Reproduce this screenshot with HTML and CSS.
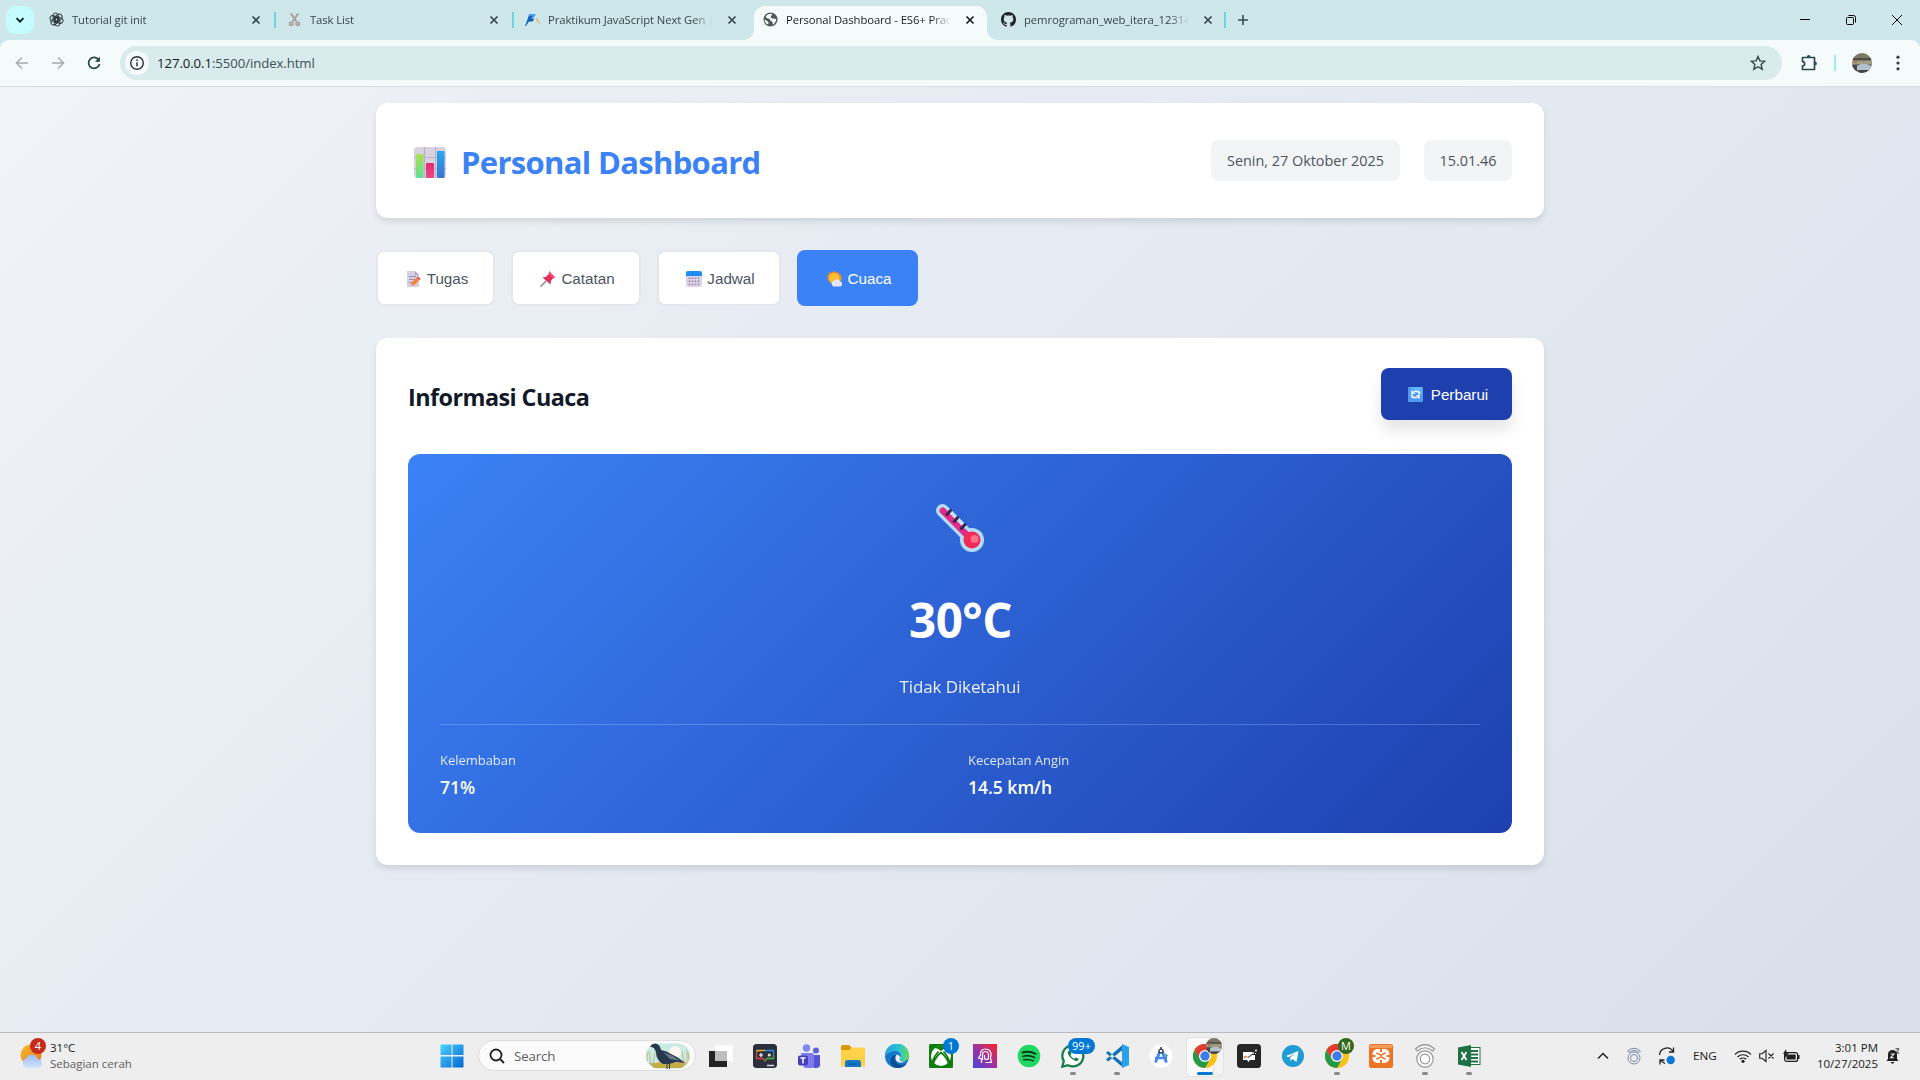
FILE: index.html
```html
<!DOCTYPE html>
<html lang="id">
<head>
<meta charset="utf-8">
<title>Personal Dashboard - ES6+ Practice</title>
<link rel="stylesheet" href="styles.css">
</head>
<body>
<svg class="defs" width="0" height="0">
  <defs>
    <symbol id="x" viewBox="0 0 10 10"><path d="M1.5 1.5l7 7M8.5 1.5l-7 7" stroke="currentColor" stroke-width="1.7" fill="none"/></symbol>
    <symbol id="chrome" viewBox="0 0 24 24">
      <circle cx="12" cy="12" r="12" fill="#fbc116"/>
      <path d="M12 12L1.6 6A12 12 0 0 1 22.4 6z" fill="#e33b2e"/>
      <path d="M12 6h10.4A12 12 0 0 0 1.6 6L6.8 15z" fill="#e33b2e"/>
      <path d="M1.6 6A12 12 0 0 0 12 24l5.2-9L12 17 6.8 15z" fill="#249a46"/>
      <circle cx="12" cy="12" r="6" fill="#fff"/><circle cx="12" cy="12" r="4.7" fill="#3b7ded"/>
    </symbol>
    <symbol id="photo" viewBox="0 0 20 20">
      <clipPath id="pc"><circle cx="10" cy="10" r="10"/></clipPath>
      <g clip-path="url(#pc)"><path fill="#7c7868" d="M0 0h20v20H0z"/><path fill="#4f4e45" d="M0 5h20v2H0z"/><path fill="#a49d86" d="M0 8h20v3H0z"/><path fill="#b4c0cf" d="M5 13l4-2h6l5 3v3H5z"/><path fill="#45454a" d="M0 12h5v8H0zM6 17h14v3H6z"/><path fill="#b0704c" d="M2 7h3v3H2z"/></g>
    </symbol>
  </defs>
</svg>

<div class="screen">
  <div class="tabstrip">
    <button class="tab-search"><svg width="10" height="10" viewBox="0 0 10 10"><path d="M1.5 3.2L5 6.7l3.500-3.500" fill="none" stroke="#0d1f22" stroke-width="1.9"/></svg></button>
    <div class="tab">
      <svg class="fav" viewBox="0 0 16 16"><g fill="none" stroke="#263033" stroke-width="1"><rect x="4.300" y="1" width="5.600" height="9" rx="2.800"/><rect x="4.300" y="1" width="5.600" height="9" rx="2.800" transform="rotate(60 8 8)"/><rect x="4.300" y="1" width="5.600" height="9" rx="2.800" transform="rotate(120 8 8)"/><rect x="4.300" y="1" width="5.600" height="9" rx="2.800" transform="rotate(180 8 8)"/><rect x="4.300" y="1" width="5.600" height="9" rx="2.800" transform="rotate(240 8 8)"/><rect x="4.300" y="1" width="5.600" height="9" rx="2.800" transform="rotate(300 8 8)"/></g></svg>
      <span class="tab-title">Tutorial git init</span><svg class="close"><use href="#x"/></svg>
    </div>
    <div class="tab ruled">
      <svg class="fav" viewBox="0 0 16 16"><g fill="none" stroke="#aaa29b" stroke-width="2"><path d="M4 1.500L10 10M12 1.500L6 10"/><circle cx="4.500" cy="12.500" r="1.700"/><circle cx="11.500" cy="12.500" r="1.700"/></g></svg>
      <span class="tab-title">Task List</span><svg class="close"><use href="#x"/></svg>
    </div>
    <div class="tab ruled">
      <svg class="fav" viewBox="0 0 16 16"><path d="M4 2h8L9 6H4z" fill="#55a2f0"/><path d="M4 4h5L5 9 1 15H0z" fill="#1668c8"/><path d="M5 7h5l-2 3H4z" fill="#1b56a4"/><path d="M12 7l3.500 5" stroke="#d8b56a" stroke-width="1.500"/></svg>
      <span class="tab-title">Praktikum JavaScript Next Gen | Kelas</span><svg class="close"><use href="#x"/></svg>
    </div>
    <div class="tab active">
      <svg class="fav" viewBox="0 0 16 16"><circle cx="8" cy="8" r="7.500" fill="#53585b"/><path d="M3 4.500C5 2 8 1.500 9.500 2c.5 2-1.500 2-1.500 3.500 1.500.5 1.500 1.500 3 1.500s2 .8 3 .5c0 2-1 4.500-3.500 6-.5-1.500.5-2.500-1-3.500C7 9 8 7 5.500 6.800 4 6.600 3 6 3 4.500zM1.500 8l3 1.500 1.500 2-.5 1.800C3 12.500 1.500 10 1.500 8z" fill="#f5fbfb"/></svg>
      <span class="tab-title">Personal Dashboard - ES6+ Practice</span><svg class="close"><use href="#x"/></svg>
    </div>
    <div class="tab">
      <svg class="fav" viewBox="0 0 16 16"><path fill="#1f2428" d="M8 0C3.580 0 0 3.580 0 8c0 3.540 2.290 6.530 5.470 7.590.4.070.55-.17.55-.38 0-.19-.01-.82-.01-1.490-2.010.37-2.530-.49-2.690-.94-.09-.23-.48-.94-.82-1.130-.28-.15-.68-.52-.01-.53.63-.01 1.080.58 1.230.82.720 1.210 1.870.87 2.330.66.070-.52.280-.87.510-1.070-1.780-.2-3.640-.89-3.640-3.950 0-.87.310-1.590.82-2.150-.08-.2-.36-1.020.08-2.120 0 0 .67-.21 2.200.82.640-.18 1.320-.27 2-.27s1.360.09 2 .27c1.530-1.040 2.200-.82 2.200-.82.440 1.100.16 1.920.08 2.120.51.560.82 1.270.82 2.150 0 3.070-1.870 3.750-3.650 3.950.29.25.54.73.54 1.480 0 1.070-.01 1.930-.01 2.200 0 .21.150.46.55.38A8.010 8.010 0 0 0 16 8c0-4.420-3.580-8-8-8z"/></svg>
      <span class="tab-title">pemrograman_web_itera_123140</span><svg class="close"><use href="#x"/></svg>
    </div>
    <svg class="newtab" viewBox="0 0 12 12"><path d="M6 1v10M1 6h10" stroke="#354b4e" stroke-width="1.600"/></svg>
    <div class="winbtns">
      <svg width="12" height="12" viewBox="0 0 12 12"><path d="M1 5.500h10" stroke="#000"/></svg>
      <svg width="12" height="12" viewBox="0 0 12 12"><g fill="none" stroke="#000"><rect x="1.500" y="3.500" width="7" height="7" rx="1"/><path d="M3.500 1.500h5a2 2 0 0 1 2 2v5"/></g></svg>
      <svg width="12" height="12" viewBox="0 0 12 12"><path d="M1 1l10 10M11 1L1 11" stroke="#000"/></svg>
    </div>
  </div>

  <div class="toolbar">
    <svg class="tb" viewBox="0 0 16 16"><path d="M14 8H3M8 2.500L2.500 8 8 13.500" fill="none" stroke="#a3adae" stroke-width="1.500"/></svg>
    <svg class="tb" viewBox="0 0 16 16"><path d="M2 8h11M8 2.500L13.500 8 8 13.500" fill="none" stroke="#a3adae" stroke-width="1.500"/></svg>
    <svg class="tb" viewBox="0 0 16 16"><path d="M12.800 5A5.500 5.500 0 1 0 13.500 9" fill="none" stroke="#2b4144" stroke-width="1.700"/><path d="M13.900 1.800v5H8.900z" fill="#2b4144"/></svg>
    <div class="omnibox">
      <span class="info"><svg width="16" height="16" viewBox="0 0 16 16"><circle cx="8" cy="8" r="6.300" fill="none" stroke="#233538" stroke-width="1.400"/><path d="M8 7.200v4M8 4.500v1.500" stroke="#233538" stroke-width="1.500"/></svg></span>
      <span class="url"><b>127.0.0.1</b>:5500/index.html</span>
      <svg class="star" viewBox="0 0 16 16"><path d="M8 1.500l1.900 4.400 4.800.4-3.600 3.200 1.100 4.700L8 11.700l-4.200 2.500 1.100-4.700L1.300 6.300l4.800-.4z" fill="none" stroke="#34484b" stroke-width="1.400"/></svg>
    </div>
    <svg class="puzzle" viewBox="0 0 18 18"><path d="M2.500 3.500h12v12h-12v-3.600a2.100 2.100 0 0 0 0-4.300z" fill="none" stroke="#2b4a4e" stroke-width="1.700" stroke-linejoin="round"/><path d="M6.800 3a1.900 1.900 0 0 1 3.800 0M15 7.500a1.900 1.900 0 0 1 0 3.800" fill="#2b4a4e"/></svg>
    <i class="tbsep"></i>
    <svg class="avatar"><use href="#photo"/></svg>
    <svg class="kebab" viewBox="0 0 4 16"><g fill="#2b4144"><circle cx="2" cy="2.200" r="1.600"/><circle cx="2" cy="8" r="1.600"/><circle cx="2" cy="13.800" r="1.600"/></g></svg>
  </div>

  <main class="page">
    <header class="card header">
      <h1><svg width="32" height="32" viewBox="0 0 32 32">
        <defs><linearGradient id="g1" x2="0" y2="1"><stop stop-color="#a8e34f"/><stop offset="1" stop-color="#62dc9a"/></linearGradient><linearGradient id="g2" x2="0" y2="1"><stop stop-color="#e5286b"/><stop offset="1" stop-color="#e84a86"/></linearGradient><linearGradient id="g3" x2="0" y2="1"><stop stop-color="#29a6f2"/><stop offset="1" stop-color="#3c74cf"/></linearGradient></defs>
        <rect width="32" height="31" rx="3.500" fill="#d9d2e2"/><path d="M10.500 0v31M21.500 0v31M0 10.500h32M0 21.500h32" stroke="#b9b1c5" stroke-width="1.200"/>
        <rect x="2" y="7" width="7.500" height="24" rx="1" fill="url(#g1)"/><rect x="12" y="16" width="8" height="15" rx="1" fill="url(#g2)"/><rect x="23" y="4" width="7.500" height="27" rx="1" fill="url(#g3)"/></svg><span>Personal Dashboard</span></h1>
      <div class="clock"><span class="pill date">Senin, 27 Oktober 2025</span><span class="pill time">15.01.46</span></div>
    </header>

    <nav class="nav">
      <button class="w1"><svg viewBox="0 0 16 16"><path d="M1 0h8l4 4v12H1z" fill="#d6cfe0"/><path d="M9 0v4h4z" fill="#a9a0bb"/><path d="M3 5.500h7M3 8.500h6M3 11.500h3" stroke="#988fa9"/><path d="M5 14.500l1-3.500 6-5.500 2.500 2.500-6 6z" fill="#f8813f"/><path d="M11 6.500l1-1 2.500 2.500-1 1z" fill="#e5486c"/></svg>Tugas</button>
      <button class="w2"><svg viewBox="0 0 16 16"><path d="M6 10l-5.500 5.500" stroke="#898095" stroke-width="1.500"/><path d="M9 0l6.500 6.500-2 .5-2.500 2.800-.5 3.700L2.500 6.500l3.700-.8L8.800 3z" fill="#e02e58"/><path d="M9 1l5.500 5.500-1.500.4L8.700 3z" fill="#fa5c80"/></svg>Catatan</button>
      <button class="w3"><svg viewBox="0 0 16 16"><rect y="1" width="16" height="15" rx="2" fill="#ddd4eb"/><path d="M0 5V2a2 2 0 0 1 2-2h12a2 2 0 0 1 2 2v3z" fill="#1e8df0"/><path d="M3.500 6.500v8M6.500 6.500v8M9.500 6.500v8M12.500 6.500v8" stroke="#91849f" stroke-width="1.500" stroke-dasharray="1.600 1.500"/></svg>Jadwal</button>
      <button class="w4 on"><svg viewBox="0 0 16 16"><path d="M7.500 0l1.700 1.500 2.300-.3.800 2 2.200 1-.4 2.300.9 2-1.700 1.500-.5 2.200-10-.2-.4-2-2-1 .6-2.300-1-2 1.900-1.300.4-2.100 2.400.1z" fill="#f58a26"/><circle cx="7.300" cy="7" r="5.300" fill="#fcbf31"/><path d="M6.500 15.500a3 3 0 0 1 .3-5.700 3.700 3.700 0 0 1 6.500.8 2.600 2.600 0 0 1 .2 4.900z" fill="#e3e6f3"/></svg>Cuaca</button>
    </nav>

    <section class="card main">
      <div class="main-head"><h2>Informasi Cuaca</h2>
        <button class="refresh"><svg width="15" height="15" viewBox="0 0 15 15"><rect width="15" height="15" rx="1" fill="#4f9bf0"/><path d="M1 0h13v8z" fill="#63b3fa"/><g fill="none" stroke="#fff" stroke-width="1.700"><path d="M11.300 7.500V6.500a2 2 0 0 0-2-2H5.500M3.700 7.500v1a2 2 0 0 0 2 2h3.800"/></g><path d="M3.300 2.800v4.200h3.800zM11.700 12.200V8H7.900z" fill="#fff"/></svg>Perbarui</button></div>
      <div class="weather">
        <svg class="thermo" viewBox="0 0 48 48"><path d="M6.500 6.500L33 33" stroke="#b4dcfb" stroke-width="13" stroke-linecap="round"/><circle cx="36" cy="36" r="12" fill="#b4dcfb"/><path d="M6.800 6.800L34 34" stroke="#e32a86" stroke-width="6.500" stroke-linecap="round"/><path d="M15 8.500L30 23.500" stroke="#c5e3fc" stroke-width="3.500"/><path d="M11 10.500l3.500-4M18.200 17.500l3.500-4M25.500 24.500l3.500-4" stroke="#34264f" stroke-width="3" stroke-linecap="round"/><circle cx="36" cy="36" r="8.500" fill="#f32957"/><circle cx="38.500" cy="35" r="4" fill="#ff8296" opacity=".8"/></svg>
        <div class="temp">30°C</div>
        <div class="desc">Tidak Diketahui</div>
        <div class="details">
          <div><span class="lbl">Kelembaban</span><span class="val">71%</span></div>
          <div><span class="lbl">Kecepatan Angin</span><span class="val">14.5 km/h</span></div>
        </div>
      </div>
    </section>
  </main>

  <footer class="taskbar">
    <div class="widget">
      <div class="wicon"><svg width="24" height="26" viewBox="0 0 24 26"><defs><linearGradient id="sun" x2="1" y2="1"><stop stop-color="#f2bd2c"/><stop offset="1" stop-color="#f0741d"/></linearGradient><linearGradient id="cl" x2="0" y2="1"><stop stop-color="#9dbcf3"/><stop offset="1" stop-color="#d3e4fb"/></linearGradient></defs><circle cx="11" cy="12" r="10.500" fill="url(#sun)"/><path d="M6 25a5 5 0 0 1-.3-9.200 6.500 6.500 0 0 1 12 .1A4.600 4.600 0 0 1 18 25z" fill="url(#cl)"/></svg><span class="badge red">4</span></div>
      <div class="wtext"><span>31°C</span><span class="grey">Sebagian cerah</span></div>
    </div>
    <div class="apps">
      <div class="app"><svg width="24" height="24" viewBox="0 0 24 24"><defs><linearGradient id="win" x2="1" y2="1"><stop stop-color="#4fd0ff"/><stop offset="1" stop-color="#0068d0"/></linearGradient></defs><path fill="url(#win)" d="M1 .5h10.500V11H.5V1zM12.500.5H23L23.500 1v10h-11zM.5 12.500h11v11H1L.5 23zM12.500 12.500h11V23l-.5.5H12.500z"/></svg></div>
      <div class="search"><svg width="16" height="16" viewBox="0 0 16 16"><circle cx="7" cy="7" r="5.500" fill="none" stroke="#222" stroke-width="1.800"/><path d="M11 11l4 4" stroke="#222" stroke-width="2"/></svg><span>Search</span>
        <svg class="bird" width="46" height="26" viewBox="0 0 46 26"><rect x="1" y=".5" width="44" height="25" rx="12" fill="#c8ebe4"/><circle cx="30" cy="9" r="6" fill="#fff6f1"/><path d="M10 21q8-7 28-4l4 3-6 5H11z" fill="#f1b796"/><path d="M4 20h38l-5 5H9z" fill="#c2ad42"/><path d="M2 18V9M6 22L4 8M8 22l2-13M42 20V7M39 21l-2-13M44 17l-1-8" stroke="#c5b887" fill="none"/><path d="M5 3.500Q8-.5 12 1q3 1 4 6 6 1 10 4l6 3 8 6-9-1-7 2h-6q-7-4-7-12L9 5z" fill="#26384c"/><path d="M18 9l10 4 7 5-10-2z" fill="#66798e"/><path d="M22 20v6M24.500 20v6" stroke="#333c47"/></svg></div>
      <div class="app first"><svg width="24" height="24" viewBox="0 0 24 24"><path d="M0 7h18v16H0z" fill="#242424"/><rect x="6" y="1" width="18" height="16" fill="#fff" opacity=".85"/><path d="M6 7h12v10H6z" fill="#bdbdbd"/></svg></div>
      <div class="app"><svg width="24" height="24" viewBox="0 0 24 24"><rect width="24" height="24" rx="3.500" fill="#2b303c"/><g fill="none" stroke-width="1.300"><path d="M12 6.500H4v2" stroke="#eaaf20"/><path d="M12 6.500h8.500v4" stroke="#2c8be4"/><path d="M3.500 8.500v6H10l2 2.500" stroke="#df3f45"/><path d="M12 17l2-2.500h6.500v-4" stroke="#4bb04b"/></g><path d="M6 11h4M8 9v4" stroke="#fff" stroke-width="1.200"/><circle cx="16.300" cy="11" r="1.600" fill="#ddd"/><path d="M14 21.500h7" stroke="#ddd" stroke-width="1.500"/></svg></div>
      <div class="app"><svg width="24" height="24" viewBox="0 0 24 24"><circle cx="9.500" cy="4" r="3.700" fill="#7e88f0"/><circle cx="19" cy="6.500" r="3" fill="#5b62dd"/><path d="M15 11h8v8a4 4 0 0 1-8 2z" fill="#5257d0"/><path d="M4 9h11a2 2 0 0 1 2 2v7a5.500 5.500 0 0 1-11 3z" fill="#8079ee"/><rect x="1" y="11.500" width="10" height="10" rx="2" fill="#4340bd"/><path d="M3.500 14h5M6 14v5.500" stroke="#fff" stroke-width="1.500"/></svg></div>
      <div class="app"><svg width="24" height="24" viewBox="0 0 24 24"><path d="M0 2.500a1.500 1.500 0 0 1 1.500-1.500H8l2.500 2.500V9H0z" fill="#d9980d"/><path d="M0 6h8l3-2.500h11.500A1.500 1.500 0 0 1 24 5v17.500H0z" fill="#ffd148"/><path d="M4 23v-4.500A2.500 2.500 0 0 1 6.500 16h11a2.500 2.500 0 0 1 2.500 2.500V23z" fill="#1878c8"/><path d="M7 20h10" stroke="#0d5b9f" stroke-width="1.300"/></svg></div>
      <div class="app"><svg width="24" height="24" viewBox="0 0 24 24"><defs><linearGradient id="ed" x2="1"><stop stop-color="#2aa0df"/><stop offset=".6" stop-color="#2cc5cf"/><stop offset="1" stop-color="#68dd59"/></linearGradient></defs><circle cx="12" cy="12" r="12" fill="#1478c9"/><path d="M0 12A12 12 0 0 1 24 11c.3 4-2.500 6-5.500 6-3 0-4-1.300-4-2 0-1 1.300-1.500 1.300-3.500C15.500 8 11 6 7 7.500 3.500 8.500 1 11 0 12z" fill="url(#ed)"/><path d="M11 11c-3 4 0 10 6 10 2 0 4-1 5-2-2 4-6 5-10 5C7 23.500 4 18 6 14c1-2 3-3 5-3z" fill="#114c93"/><path d="M12 10.500a4 4 0 0 1 3.300 3.500c-.5.800-.8 1-.8 1.500 0 1.500 3 2.500 6 1.500-5 3.500-10 1-10-3 0-1.500.5-2.500 1.500-3.500z" fill="#eee"/></svg></div>
      <div class="app"><svg width="24" height="24" viewBox="0 0 24 24"><rect width="24" height="24" rx="1.500" fill="#107c10"/><circle cx="12" cy="12" r="10" fill="#fff"/><path d="M5.500 4Q9 4 12 7q3-3 6.500-3Q16 2 12 2T5.500 4z" fill="#107c10"/><path d="M4 20Q6 13.500 12 8.500q6 5 8 11.500M3.500 18Q5 12 9.500 7.500M20.500 18Q19 12 14.500 7.500" fill="none" stroke="#107c10" stroke-width="1.700"/></svg><span class="badge blue">1</span></div>
      <div class="app"><svg width="24" height="24" viewBox="0 0 24 24"><defs><linearGradient id="ai" y1="1" x2="1" y2="0"><stop stop-color="#4746dc"/><stop offset=".5" stop-color="#a0329e"/><stop offset="1" stop-color="#ff2320"/></linearGradient></defs><path d="M0 0h24v24H0z" fill="url(#ai)"/><g fill="none" stroke="#fff" stroke-width="1.200"><path d="M8.500 19v-4l-3-1 2-3c-.5-4 2-6 5-6 4 0 6 3 5.500 6.500L17.500 14l1 4.500h-6"/><path d="M9.500 16v-5.500a3 3 0 0 1 6 0v3a2 2 0 0 1-4 0v-2.500"/></g></svg></div>
      <div class="app"><svg width="24" height="24" viewBox="0 0 24 24"><circle cx="12" cy="12" r="11.300" fill="#1ed760"/><g fill="none" stroke="#10351d" stroke-linecap="round"><path d="M5.500 8.500q7-2 13 1.300" stroke-width="2.100"/><path d="M6 12.300q6-1.600 11.500 1.200" stroke-width="1.800"/><path d="M6.800 15.800q5-1.200 9.500 1" stroke-width="1.500"/></g></svg></div>
      <div class="app run"><svg width="24" height="24" viewBox="0 0 24 24"><path d="M1.300 22.700l1.500-5.500A10.500 10.500 0 1 1 7 21.200z" fill="#fff" stroke="#177d4c" stroke-width="2.300"/><path d="M8 6.500c-2 1-1.500 4 1.500 7s6.500 4.500 8 2.500l-.3-1.500-2.700-1-1.300 1.300C11.500 14 10 12.500 9.500 11l1-1.300-1-3z" fill="#177d4c"/></svg><span class="badge blue wide">99+</span></div>
      <div class="app run"><svg width="24" height="24" viewBox="0 0 24 24"><path d="M1 9l2-2 15 12v4.500zM1 15.500l2 2L18 5.500V.5z" fill="#1072b8"/><path d="M17 0l7 3v18l-7 3z" fill="#2aa1ec"/></svg></div>
      <div class="app"><svg width="24" height="24" viewBox="0 0 24 24"><circle cx="12" cy="12" r="11.500" fill="#fff"/><path d="M11 7L6.500 18.500M13 7l4.500 11.500" stroke="#4285f4" stroke-width="2.800"/><path d="M6 14h12" stroke="#4c87ee" stroke-width="2.400"/><path d="M16 9.500l3 2-2 2z" fill="#25a565"/><circle cx="12" cy="7" r="2" fill="#fff" stroke="#233046" stroke-width="1.200"/><path d="M12 3v3" stroke="#233046" stroke-width="1.400"/></svg></div>
      <div class="app open run"><i class="stack"></i><svg width="24" height="24"><use href="#chrome"/></svg><svg class="chip"><use href="#photo" width="16" height="16"/></svg></div>
      <div class="app"><svg width="24" height="24" viewBox="0 0 24 24"><rect width="24" height="24" rx="3.500" fill="#272727"/><path d="M6 8h9v3h3v5h-5l-1.500 2L10 16H6z" fill="#fff"/><path d="M7 14l2-2" stroke="#e24b54" stroke-width="1.300"/><path d="M9 12l2 1.500" stroke="#e8b33c" stroke-width="1.300"/><path d="M11 13.500l4-3" fill="none" stroke="#3d7b9c" stroke-width="1.300"/><g fill="#fff"><circle cx="16" cy="9" r=".9"/><circle cx="19" cy="6.500" r="1"/><circle cx="18.500" cy="9.500" r=".6"/></g></svg></div>
      <div class="app"><svg width="24" height="24" viewBox="0 0 24 24"><circle cx="12" cy="12" r="11" fill="#209bd4"/><path d="M5 12l12.500-5-2 11-4-3-2 2-.3-3.500L15 9l-7.500 4.300z" fill="#fff"/></svg></div>
      <div class="app run"><svg width="24" height="24"><use href="#chrome"/></svg><span class="badge green">M</span></div>
      <div class="app"><svg width="24" height="24" viewBox="0 0 24 24"><rect width="24" height="24" rx="2" fill="#ec7426"/><path d="M1 1h22v3H1z" fill="#f09a5b"/><rect x="3.500" y="5" width="17" height="14" rx="5" fill="#fff"/><path d="M12 4v4M12 16v4M3 12h3.500M17.500 12H21" stroke="#ec7426" stroke-width="2"/><path d="M7.800 9.300h.8l3.400 2 3.400-2h.8M7.800 14.700h.8l3.400-2 3.400 2h.8" fill="none" stroke="#ec7426" stroke-width="1.500" stroke-linecap="round"/></svg></div>
      <div class="app run"><svg width="24" height="24" viewBox="0 0 24 24"><g fill="#fff" stroke="#999" stroke-width="1.200"><path d="M2.500 5Q12-3.500 21.500 5l-2 2Q12 .5 4.500 7z"/><circle cx="12" cy="15" r="8.200"/><circle cx="12" cy="15" r="4.800"/></g></svg></div>
      <div class="app run"><svg width="24" height="24" viewBox="0 0 24 24"><rect x="12" y="3.500" width="11" height="17" fill="#fff" stroke="#1f7244"/><path d="M14 7h7M14 10.500h7M14 14h7M14 17.500h7" stroke="#1f7244" stroke-width="1.800"/><path d="M1 3.500L14 1v22L1 20.500z" fill="#1f7244"/><path d="M4.500 8l5 8M9.500 8l-5 8" stroke="#fff" stroke-width="1.800"/></svg></div>
    </div>
    <div class="tray">
      <svg class="t1" width="12" height="12" viewBox="0 0 12 12"><path d="M1 8.500l5-5 5 5" fill="none" stroke="#222" stroke-width="1.500"/></svg>
      <svg class="t2" width="16" height="18" viewBox="0 0 16 18"><g fill="none" stroke="#7889aa"><path d="M1.500 4Q8-1.500 14.500 4l-1.500 1.500Q8 1.500 3 5.500z"/><circle cx="8" cy="11" r="6"/><circle cx="8" cy="11" r="3.500"/></g></svg>
      <svg class="t3" width="18" height="18" viewBox="0 0 18 18"><g fill="none" stroke="#222" stroke-width="1.300"><path d="M1.500 8A7.300 7.300 0 0 1 15 4.500M15.500.5v4.500H11M7 16.500L2.500 13.500M2 17.500V13h4.500"/></g><circle cx="12.700" cy="13" r="4.200" fill="#0878d7"/></svg>
      <span class="eng">ENG</span>
      <svg class="t4" width="18" height="16" viewBox="0 0 18 16"><g fill="none" stroke="#222" stroke-width="1.200"><path d="M1 6.500a11.300 11.300 0 0 1 16 0M3.500 9a7.800 7.800 0 0 1 11 0M5.800 11.300a4.600 4.600 0 0 1 6.400 0"/></g><circle cx="9" cy="13.300" r="1.600" fill="#222"/></svg>
      <svg class="t5" width="16" height="14" viewBox="0 0 16 14"><path d="M.7 4.700h2.500L7 1.500v11L3.200 9.300H.7zM9.500 4.500l5 5M14.500 4.500l-5 5" fill="none" stroke="#222" stroke-width="1.100"/></svg>
      <svg class="t6" width="17" height="14" viewBox="0 0 17 14"><rect x="1.600" y="3.600" width="13" height="8.800" rx="2" fill="none" stroke="#222" stroke-width="1.200"/><rect x="3.500" y="5.500" width="9.200" height="5" fill="#222"/><path d="M15 6h1.500v4H15zM3 0L0 5h2v4l4-5.500H3.500z" fill="#222"/></svg>
      <div class="dt"><span>3:01 PM</span><span>10/27/2025</span></div>
      <svg class="bell" width="14" height="16" viewBox="0 0 14 16"><path d="M2 11V6.500C2 3.500 4 2 6.500 2S11 4 11 6.500V11l1.500 2H.5zM4.500 14h4l-2 2z" fill="#1c1c1c"/><path d="M4.500 6h3.500l-3.500 3.800H8" fill="none" stroke="#eee" stroke-width="1.100"/><path d="M9.500.8h3.500L10 5h3.300" fill="none" stroke="#333"/></svg>
    </div>
  </footer>
</div>
</body>
</html>
```
FILE: styles.css
```css
* { box-sizing: border-box; }
body { margin: 0; font-family: "Open Sans", "Noto Sans", sans-serif; overflow: hidden; }
svg { display: block; flex: none; }
.defs { position: absolute; }
button { font: inherit; border: 0; padding: 0; margin: 0; }
.screen { width: 1920px; height: 1080px; display: flex; flex-direction: column; background: #cee7ea; }

/* browser chrome */
.tabstrip { height: 40px; display: flex; align-items: flex-start; padding-left: 6px; background: #cee7ea; }
.tab-search { width: 28px; height: 28px; margin: 6px 3px 0 0; border-radius: 10px; background: #c6fbff; display: grid; place-items: center; }
.tab { position: relative; width: 238px; height: 34px; margin-top: 6px; padding: 0 18px 7px 12px; display: flex; align-items: center; color: #34494c; font-size: 11.3px; }
.tab.ruled::before { content: ""; position: absolute; left: -1px; top: 6px; width: 2px; height: 16px; background: #6cd7df; }
.fav { width: 15px; height: 15px; margin-right: 8px; }
.tab-title { flex: 1; overflow: hidden; white-space: nowrap; letter-spacing: -.1px; margin-right: 14px; -webkit-mask-image: linear-gradient(90deg, #000 88%, transparent); }
.close { width: 10px; height: 10px; color: #34494c; margin-right: -4px; }
.tab.active { width: 233px; margin-left: 3px; margin-right: 2px; padding-left: 9px; padding-right: 16px; border-radius: 11px 11px 0 0; background: #f5fbfb; color: #14201f; }
.tab.active .close { color: #14201f; }
.tab.active::before, .tab.active::after { content: ""; position: absolute; bottom: 0; width: 10px; height: 10px; }
.tab.active::before { left: -10px; background: radial-gradient(circle at 0 0, transparent 9.5px, #f5fbfb 10px); }
.tab.active::after { right: -10px; background: radial-gradient(circle at 100% 0, transparent 9.5px, #f5fbfb 10px); }
.tab:last-of-type { margin-right: 0; }
.newtab { width: 12px; height: 12px; margin: 14px 0 0 10px; }
.winbtns { margin: 14px 17px 0 auto; display: flex; gap: 34px; }
.tab.active + .tab::after { content: ""; position: absolute; right: 1px; top: 6px; width: 2px; height: 16px; background: #6cd7df; }

.toolbar { height: 47px; display: flex; align-items: center; padding: 0 20px 1px 14px; background: #f5fbfb; border-bottom: 1px solid #d3dfe3; border-radius: 9px 9px 0 0; }
.tb { width: 16px; height: 16px; margin-right: 20px; }
.omnibox { width: 1662px; height: 34px; margin-left: -2px; border-radius: 17px; background: #daebed; display: flex; align-items: center; padding: 0 16px 0 5px; }
.info { width: 24px; height: 24px; border-radius: 50%; background: #f5fbfb; display: grid; place-items: center; }
.url { margin-left: 8px; font-size: 13.2px; letter-spacing: -.08px; color: #3f5154; }
.url b { font-weight: 400; color: #121e20; }
.star { width: 16px; height: 16px; margin-left: auto; }
.puzzle { width: 18px; height: 18px; margin-left: 18px; }
.tbsep { width: 2px; height: 16px; margin-left: 16px; background: #96eff7; }
.avatar { width: 20px; height: 20px; margin-left: 16px; }
.kebab { width: 4px; height: 16px; margin-left: auto; }

/* dashboard */
.page { flex: 1; min-height: 0; padding: 16px 376px 0; background: linear-gradient(135deg, #f0f3f7 0%, #e7ecf4 35%, #e1e8f0 62%, #d8dfeb 100%); }
.card { background: #fff; border-radius: 12px; box-shadow: 0 4px 6px rgba(0, 0, 0, .1); }
.header { height: 115px; padding: 0 32px; display: flex; justify-content: space-between; align-items: center; }
h1 { margin: 3px 0 0 6px; display: flex; align-items: center; gap: 15px; color: #3b82f6; font-size: 31px; letter-spacing: -.68px; line-height: 1.3; font-weight: 700; white-space: nowrap; }
h1 svg { margin-top: 2px; }
.clock { display: flex; gap: 24px; }
.pill { height: 41px; line-height: 41px; border-radius: 8px; background: #f3f4f6; color: #4b5563; font-size: 14.4px; text-align: center; white-space: nowrap; }
.date { width: 189px; }
.time { width: 88px; }
.nav { display: flex; gap: 16px; margin: 32px 0; }
.nav button { height: 56px; border: 2px solid #e5e7eb; border-radius: 8px; background: #fff; color: #4b5563; display: flex; align-items: center; justify-content: center; gap: 5px; padding: 1px 0 0 3px; font: 15.2px "Liberation Sans", Arial, sans-serif; }
.nav svg { width: 16px; height: 16px; }
.w1 { width: 119px; } .w2 { width: 130px; } .w3 { width: 124px; } .w4 { width: 121px; }
.nav .on { background: #3b82f6; border-color: #3b82f6; color: #fff; }
.main { height: 527px; padding: 30px 32px 32px; }
.main-head { display: flex; justify-content: space-between; height: 52px; margin-bottom: 34px; }
h2 { margin: 12px 0 0; font-size: 23.4px; letter-spacing: -.56px; line-height: 34px; color: #111827; font-weight: 700; }
.refresh { width: 131px; height: 52px; border-radius: 8px; background: #1e40af; color: #fff; display: flex; align-items: center; justify-content: center; gap: 8px; padding: 1px 0 0 3px; font: 15.2px "Liberation Sans", Arial, sans-serif; box-shadow: 0 10px 15px rgba(0, 0, 0, .1); }
.weather { height: 379px; padding: 50px 32px 0; border-radius: 12px; background: linear-gradient(135deg, #3b82f6, #1e40af); color: #fff; text-align: center; }
.thermo { width: 48px; height: 48px; margin: 0 auto; }
.temp { margin-top: 33px; height: 70px; line-height: 70px; padding-left: 1px; font-size: 47.5px; letter-spacing: -.5px; font-weight: 700; }
.desc { margin-top: 18px; height: 28px; line-height: 28px; font-size: 17px; letter-spacing: -.12px; opacity: .9; }
.details { margin-top: 23px; border-top: 1px solid rgba(255, 255, 255, .2); padding-top: 24px; display: grid; grid-template-columns: 1fr 1fr; gap: 16px; text-align: left; }
.details div { display: flex; flex-direction: column; }
.lbl { font-size: 13px; line-height: 23px; opacity: .85; letter-spacing: -.03px; }
.val { font-size: 17.5px; line-height: 28px; font-weight: 600; margin-top: 1px; }

/* taskbar */
.taskbar { height: 48px; border-top: 1px solid #bbbcbf; padding-bottom: 2px; background: #eee; display: flex; align-items: center; color: #1b1b1b; font-size: 11.5px; }
.widget { width: 430px; padding-left: 20px; display: flex; align-items: center; }
.wicon { position: relative; }
.wtext { margin-left: 6px; display: flex; flex-direction: column; line-height: 16px; }
.grey { color: #606060; }
.badge { position: absolute; height: 16px; min-width: 16px; line-height: 16px; border-radius: 8px; text-align: center; color: #fff; font-size: 11px; }
.red { left: 10px; top: -5px; background: #c42b1c; }
.blue { right: 4px; top: 4px; background: #0078d4; }
.wide { width: 27px; right: 0; }
.green { right: 5px; top: 4px; background: #33691e; }
.apps { display: flex; align-items: center; }
.app { position: relative; width: 44px; height: 44px; display: grid; place-items: center; }
.app.first { margin-left: 3px; }
.app > svg { position: relative; }
.app.run::after { content: ""; position: absolute; left: 19px; bottom: 3px; width: 6px; height: 3px; border-radius: 2px; background: #888; }
.app.open.run::after { left: 14px; width: 16px; background: #0078d4; }
.app.open::before { content: ""; position: absolute; left: 3px; top: 3px; width: 35px; height: 38px; border-radius: 4px; background: #f9f9f9; border: 1px solid #e2e2e2; }
.stack { position: absolute; left: 30px; top: 3px; width: 11px; height: 38px; border-radius: 4px; background: #f4f4f4; border: 1px solid #e2e2e2; }
.app > .chip { position: absolute; left: 23px; top: 4px; width: 16px; height: 16px; }
.search { width: 218px; height: 31px; margin: 0 0 0 4px; border: 1px solid #dcdcdc; border-radius: 16px; background: #fbfbfb; display: flex; align-items: center; padding: 0 4px 0 10px; color: #5d5d5d; font-size: 13.3px; letter-spacing: -.15px; }
.search span { margin-left: 9px; }
.bird { margin-left: auto; }
.tray { margin-left: auto; display: flex; align-items: center; padding-right: 20px; }
.t2 { margin-left: 17px; } .t3 { margin-left: 16px; }
.eng { margin-left: 17px; width: 24px; font-size: 11.6px; }
.t4 { margin-left: 17px; } .t5 { margin-left: 7px; } .t6 { margin-left: 8px; }
.dt { width: 78px; display: flex; flex-direction: column; line-height: 16px; text-align: right; white-space: nowrap; }
.bell { margin-left: 8px; }
```
